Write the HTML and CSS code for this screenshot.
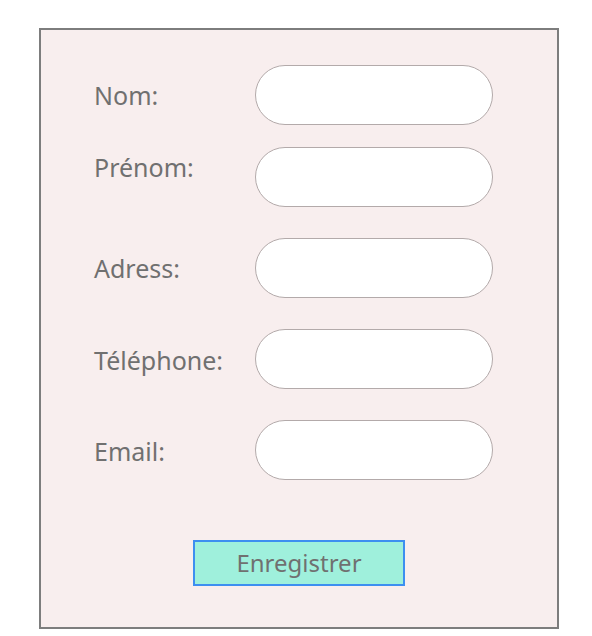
FILE: index.html
```html
<!DOCTYPE html>
<html lang="fr">
<head>
<meta charset="utf-8">
<link rel="stylesheet" href="styles.css">
</head>
<body>
<form class="card">
  <div class="fields">
    <div class="row">
      <label class="label">Nom:</label>
      <input class="field" type="text">
    </div>
    <div class="row">
      <label class="label label-top">Prénom:</label>
      <input class="field" type="text">
    </div>
    <div class="row row-spaced">
      <label class="label">Adress:</label>
      <input class="field" type="text">
    </div>
    <div class="row row-spaced">
      <label class="label label-low">Téléphone:</label>
      <input class="field" type="text">
    </div>
    <div class="row row-spaced">
      <label class="label label-low">Email:</label>
      <input class="field" type="email">
    </div>
  </div>
  <div class="actions">
    <button class="save" type="button">Enregistrer</button>
  </div>
</form>
</body>
</html>
```

FILE: styles.css
```css
html, body {
  margin: 0;
  padding: 0;
  background: #ffffff;
}
body {
  font-family: "Noto Sans", "Open Sans", sans-serif;
  color: #707070;
}
.card {
  box-sizing: border-box;
  width: 520px;
  height: 601px;
  margin: 28px 0 0 39px;
  border: 2px solid #7d7d7d;
  background: #f8eeee;
  padding: 35px 0 0 53px;
  display: flex;
  flex-direction: column;
}
.fields {
  display: flex;
  flex-direction: column;
  gap: 22px;
}
.row {
  display: flex;
  height: 60px;
}
.row-spaced {
  margin-top: 9px;
}
.label {
  width: 161px;
  font-size: 25px;
  line-height: 34px;
  padding-top: 13px;
}
.label-top {
  padding-top: 3px;
}
.label-low {
  padding-top: 14px;
}
.field {
  box-sizing: border-box;
  width: 238px;
  height: 60px;
  border: 1px solid #b3aaaa;
  border-radius: 30px;
  background: #ffffff;
  margin: 0;
  padding: 0 20px;
  outline: none;
}
.actions {
  display: flex;
  justify-content: center;
  padding-top: 60px;
  padding-right: 53px;
}
.save {
  box-sizing: border-box;
  width: 212px;
  height: 46px;
  border: 2px solid #3d8ff0;
  background: #9ff0dc;
  color: #707070;
  font-family: "Noto Sans", "Open Sans", sans-serif;
  font-size: 24px;
  line-height: 40px;
  padding: 0;
  margin: 0;
}
```
